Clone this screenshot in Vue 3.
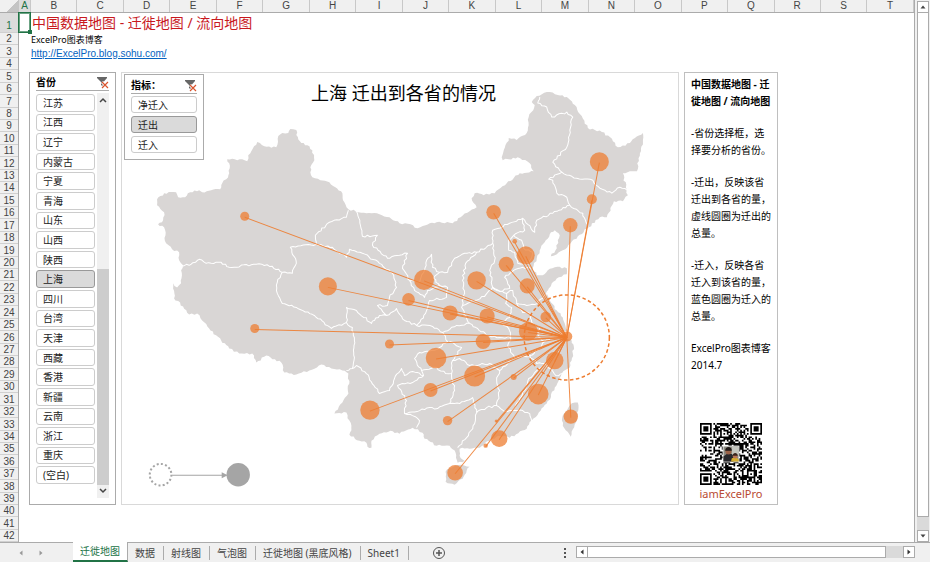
<template>
  <div class="workbook">
    <div class="upper">
      <div class="sheet">
        <div class="col-heads">
          <div class="corner"></div>
          <div class="col-head narrow selected">A</div>
          <div v-for="c in columns" :key="c" class="col-head">{{ c }}</div>
        </div>
        <div class="sheet-body">
          <div class="row-heads">
            <div v-for="n in 42" :key="n" class="row-head" :class="{ first: n === 1 }">{{ n }}</div>
          </div>
          <main class="cells">
            <div class="cursor"></div>
            <h1 class="title">中国数据地图 - 迁徙地图 / 流向地图</h1>
            <div class="author">ExcelPro图表博客</div>
            <a class="link" href="http://ExcelPro.blog.sohu.com/">http://ExcelPro.blog.sohu.com/</a>

            <div class="panels">
              <section class="slicer">
                <header class="slicer-head">
                  <span>省份</span>
                  <button class="clear" aria-label="清除筛选器">
                    <svg viewBox="0 0 12 12" width="12" height="12">
                      <path d="M0 0h10v1L6.500 5v5L4 8V5L0 1z" fill="#666" />
                      <path d="M5 5l6 6M11 5l-6 6" stroke="#fff" stroke-width="3" />
                      <path d="M5 5l6 6M11 5l-6 6" stroke="#d9532c" stroke-width="1.200" />
                    </svg>
                  </button>
                </header>
                <div class="slicer-body">
                  <div class="items">
                    <button
                      v-for="p in provinces"
                      :key="p"
                      class="item"
                      :class="{ active: p === province }"
                      @click="province = p"
                    >{{ p }}</button>
                  </div>
                  <div class="scroller">
                    <button class="scroller-btn" aria-label="向上">
                      <svg viewBox="0 0 12 12" width="12" height="12"><path d="M3 8l3-3 3 3" class="chevron" /></svg>
                    </button>
                    <div class="scroller-space"></div>
                    <div class="scroller-thumb"></div>
                    <button class="scroller-btn" aria-label="向下">
                      <svg viewBox="0 0 12 12" width="12" height="12"><path d="M3 4l3 3 3-3" class="chevron" /></svg>
                    </button>
                  </div>
                </div>
              </section>

              <section class="chart">
                <svg class="map" viewBox="123 73 555 430" role="img" aria-label="迁徙地图">
                  <text class="chart-title" x="404" y="100" text-anchor="middle">{{ province }} {{ metric }}到各省的情况</text>
                  <path v-for="(d, i) in landPaths" :key="'l' + i" :d="d" class="land" />
                  <path v-for="(d, i) in borderPaths" :key="'b' + i" :d="d" class="border" />
                  <circle v-for="(b, i) in bubbles" :key="'c' + i" :cx="b[0]" :cy="b[1]" :r="b[2]" class="bubble" />
                  <line v-for="(b, i) in bubbles" :key="'f' + i" :x1="b[0]" :y1="b[1] + 1" x2="567" y2="337" class="flow" />
                  <circle cx="567" cy="337" r="42.500" class="total" />
                  <circle cx="161.500" cy="474" r="10.800" class="legend-from" />
                  <path d="M173 474.500h51" stroke="#a5a5a5" stroke-width="1" />
                  <path d="M222.500 471.500l6 3-6 3z" fill="#a5a5a5" />
                  <circle cx="239" cy="474" r="11.700" fill="#a5a5a5" />
                </svg>
                <section class="slicer metric">
                  <header class="slicer-head">
                    <span>指标：</span>
                    <button class="clear" aria-label="清除筛选器">
                      <svg viewBox="0 0 12 12" width="12" height="12">
                        <path d="M0 0h10v1L6.500 5v5L4 8V5L0 1z" fill="#666" />
                        <path d="M5 5l6 6M11 5l-6 6" stroke="#fff" stroke-width="3" />
                        <path d="M5 5l6 6M11 5l-6 6" stroke="#d9532c" stroke-width="1.200" />
                      </svg>
                    </button>
                  </header>
                  <div class="metric-items">
                    <button
                      v-for="m in metrics"
                      :key="m"
                      class="item"
                      :class="{ active: m === metric }"
                      @click="metric = m"
                    >{{ m }}</button>
                  </div>
                </section>
              </section>

              <aside class="notes">
                <p class="strong">中国数据地图 - 迁<br />徙地图 / 流向地图</p>
                <p>-省份选择框，选<br />择要分析的省份。</p>
                <p>-迁出，反映该省<br />迁出到各省的量，<br />虚线圆圈为迁出的<br />总量。</p>
                <p>-迁入，反映各省<br />迁入到该省的量，<br />蓝色圆圈为迁入的<br />总量。</p>
                <p>ExcelPro图表博客<br />2014.7</p>
                <div class="qr">
                  <svg viewBox="0 0 37 37" width="62" height="62" role="img" aria-label="二维码">
                    <path :d="qrPath" fill="#000" />
                    <rect x="13.500" y="13.500" width="10" height="10" fill="#fff" />
                    <rect x="14" y="14" width="9" height="9" fill="#8b8a80" />
                    <rect x="19" y="14" width="4" height="5" fill="#c3c5be" />
                    <path d="M14 23v-3l2-1.500h3l1 1.500v3z" fill="#28282c" />
                    <circle cx="17" cy="17" r="1.800" fill="#9a6248" />
                    <path d="M15 16.500c0-3 4-3 4 0z" fill="#211a18" />
                    <path d="M18.500 23l.500-2 2-.500 2 1V23z" fill="#d6ae2f" />
                    <circle cx="21" cy="19.800" r="1.400" fill="#b97558" />
                    <path d="M19.500 19.500c0-2.200 3-2.200 3 0z" fill="#3a241d" />
                  </svg>
                  <div class="qr-name">iamExcelPro</div>
                </div>
              </aside>
            </div>
          </main>
        </div>
      </div>
      <div class="vscroll">
        <button class="bar-btn" aria-label="向上滚动">
          <svg viewBox="0 0 10 10" width="10" height="10"><path d="M2.500 6.500h5L5 3.500z" fill="#444" /></svg>
        </button>
        <div class="v-thumb"></div>
        <div class="v-rest"></div>
        <button class="bar-btn" aria-label="向下滚动">
          <svg viewBox="0 0 10 10" width="10" height="10"><path d="M2.500 3.500h5L5 6.500z" fill="#444" /></svg>
        </button>
      </div>
    </div>

    <footer class="tabbar">
      <div class="tab-nav">
        <button aria-label="上一个"><svg viewBox="0 0 8 8" width="8" height="8"><path d="M5.500 1.500v5L2.500 4z" fill="#999" /></svg></button>
        <button aria-label="下一个"><svg viewBox="0 0 8 8" width="8" height="8"><path d="M2.500 1.500v5l3-2.500z" fill="#999" /></svg></button>
      </div>
      <nav class="tabs">
        <button
          v-for="t in tabs"
          :key="t"
          class="tab"
          :class="{ current: t === tab }"
          @click="tab = t"
        >{{ t }}</button>
      </nav>
      <button class="add" aria-label="新工作表">
        <svg viewBox="0 0 14 14" width="14" height="14" fill="none" stroke="#555">
          <circle cx="7" cy="7" r="5.500" />
          <path d="M4 7h6M7 4v6" stroke-width="1.500" />
        </svg>
      </button>
      <div class="grip"><i></i><i></i><i></i></div>
      <div class="hscroll">
        <button class="bar-btn" aria-label="向左滚动">
          <svg viewBox="0 0 10 10" width="10" height="10"><path d="M6.500 2.500v5L3.500 5z" fill="#333" /></svg>
        </button>
        <div class="h-thumb"></div>
        <div class="h-rest"></div>
        <button class="bar-btn" aria-label="向右滚动">
          <svg viewBox="0 0 10 10" width="10" height="10"><path d="M3.500 2.500v5l3-2.500z" fill="#333" /></svg>
        </button>
      </div>
    </footer>
  </div>
</template>

<script setup>
import { ref } from "vue";

const columns = "BCDEFGHIJKLMNOPQRST".split("");

const provinces = [
  "江苏", "江西", "辽宁", "内蒙古", "宁夏", "青海", "山东", "山西", "陕西", "上海",
  "四川", "台湾", "天津", "西藏", "香港", "新疆", "云南", "浙江", "重庆", "(空白)",
];
const metrics = ["净迁入", "迁出", "迁入"];
const tabs = ["迁徙地图", "数据", "射线图", "气泡图", "迁徙地图 (黑底风格)", "Sheet1"];

const province = ref("上海");
const metric = ref("迁出");
const tab = ref("迁徙地图");

// "x,y x,y ..." outlines: mainland, Hainan, Taiwan
const land = [
  `158,199 165,193 177,192 179,197 186,197 191,192 200,190 203,192 212,190 221,189 223,183 227,179 230,173 230,163
  228,159 243,159 248,161 249,155 258,142 265,146 277,147 279,136 283,133 289,133 291,129 297,130 297,135 302,143
  308,145 313,150 315,160 311,167 311,172 313,177 321,180 330,182 336,187 343,193 345,202 349,209 367,213 380,214
  390,217 400,223 411,224 418,228 426,225 437,222 453,223 461,217 470,211 477,207 472,198 475,193 484,195 495,193
  507,183 520,173 534,171 530,163 518,157 509,159 503,160 502,157 509,138 517,140 527,133 529,117 535,105 532,102
  537,96 550,92 558,95 567,97 575,105 580,114 588,128 602,132 610,137 618,147 630,143 635,138 643,133 643,142
  640,153 637,171 623,173 626,187 628,195 623,201 614,201 607,217 600,217 589,227 578,236 563,250 555,255 551,256
  557,248 558,240 560,235 555,230 550,234 546,240 540,250 537,258 533,268 537,275 543,275 548,270 555,267 567,268
  567,274 559,277 552,283 549,288 547,293 550,300 557,310 563,317 565,323 568,330 559,333 572,340 574,346 573,353
  570,367 562,373 555,387 547,403 541,410 532,420 527,428 510,437 499,435 490,440 480,447 470,448 460,448 460,455
  465,460 458,462 456,452 450,445 437,445 425,438 423,432 413,427 400,433 391,430 380,433 372,440 372,447 368,446
  367,442 360,440 350,434 352,425 350,420 347,412 335,413 343,402 349,393 349,373 343,370 332,368 322,364 310,370
  297,374 285,372 282,362 267,355 257,362 253,353 240,353 230,348 222,340 210,328 203,320 198,313 190,314 184,306
  175,298 174,283 178,287 182,283 182,270 184,265 180,260 180,252 173,249 167,243 165,227 159,224 164,220 165,212 158,205`,
  "446,471 446,481 455,484 463,478 467,470 470,466 462,464 452,467",
  "575,402 578,402 577,417 571,436 563,425 563,415 570,405",
];

const borders = [
  `182,265 190,265 200,259 207,263 222,262 230,267 257,264 273,266 283,272 293,273 297,263 291,247 317,244
  316,235 330,222 347,217 349,210`,
  "283,272 278,282 278,293 283,303 297,307 315,315 332,328 347,322 353,327 355,340 355,357 353,368 347,370",
  `347,322 347,307 357,310 372,323 380,315 387,315 378,305 388,305 390,297 397,287 393,273 380,263 363,253
  350,249 347,257 333,247 317,244`,
  `357,211 361,225 363,236 378,235 373,245 388,258 400,255 408,253 403,268 410,280 420,282 425,270 427,260
  432,254 433,267 440,272 448,272 455,258 465,253 477,252 493,243 493,230 510,223 523,218 535,232 537,220
  553,213 570,205 567,197 557,193 553,180 549,179 562,172 553,162 567,147 570,130 573,117 567,112 552,117 547,107 538,103 540,97`,
  "562,172 577,178 593,180 600,188 605,190 612,193 620,187 627,190",
  "570,205 583,213 588,227",
  "410,280 415,290 425,297 428,290 440,285 434,278 440,272",
  "440,285 448,287 447,297 430,300 426,313 417,325",
  "477,252 466,263 463,280 465,293 462,307 467,318 470,323",
  "493,243 495,260 490,270 493,287 485,296 470,302 463,305",
  "493,287 500,291 510,288 505,277 514,270 523,267 531,268",
  "509,240 514,235 522,240 524,248 533,252 529,262 518,263 515,252 509,250 509,240",
  "523,218 525,230 514,235",
  "493,287 507,293 513,290 517,303 527,305 535,304 543,298 549,290",
  "507,293 506,303 512,307 510,317 500,322 509,328 511,337 500,337 487,335 478,328 470,323",
  "517,303 523,312 530,313 532,322 540,327 538,336 545,341 553,337 565,338",
  "387,315 397,308 405,320 417,325 433,326 443,332 457,325 470,323",
  "443,332 448,341 440,347 432,350 420,352 415,358 422,370 437,367 446,373 452,373 453,360 462,347 450,341",
  "353,368 357,365 367,373 380,393 390,390 395,378 402,368 405,375 413,371 424,375 422,370",
  "424,375 413,382 398,385 407,400 405,413 413,415 420,420 417,427",
  "405,413 420,410 430,407 438,408 450,403 455,390 452,373",
  "450,403 460,403 467,400 473,397 477,412 487,407 497,405 500,390 497,380 500,370 490,363 470,365 460,358 453,360",
  "477,412 475,423 467,437 458,447",
  "497,405 505,411 513,410 523,410 530,413 532,421",
  "513,410 520,398 525,390 529,378 535,372 545,363 556,375 563,373",
  "500,370 515,357 508,345 511,337",
  "515,357 530,355 538,350 545,341",
  "530,355 537,363 545,363",
];

// cx, cy, r
const bubbles = [
  [245.5, 216, 4.5], [255.5, 328, 4.5], [328.5, 286, 9], [494, 212, 7.3], [515, 241, 2.3],
  [526, 255, 9], [506.5, 264, 7.5], [527.5, 285.5, 7.5], [477, 280, 9.2], [424.5, 279.5, 10],
  [409, 299, 6.3], [450.5, 312.5, 7.5], [487.5, 315.5, 7.5], [528.5, 331, 9.3], [546, 316.5, 5.3],
  [567.5, 336, 5], [483.5, 341, 7.5], [390, 343.5, 4.5], [436.5, 357.5, 10.3], [555, 360, 8.7],
  [475, 375.5, 10.5], [514, 376.5, 3], [538.5, 393.5, 10.3], [431, 389.5, 7], [370.5, 409.5, 9.7],
  [448, 420, 4.7], [496.5, 420.5, 1.5], [499.5, 438, 8.3], [486, 445, 2.2], [455.5, 472, 7.8],
  [571, 416, 7.2], [599.5, 161.5, 9.5], [592, 199, 5], [570.5, 225, 7.2],
];

const noise = (x, y) => {
  const v = Math.sin(x * 12.9898 + y * 78.233) * 43758.5453;
  return v - Math.floor(v) - 0.5;
};

// breaks straight segments into short wobbly ones
const roughen = (text, closed) => {
  const pts = text.trim().split(/\s+/).map((p) => p.split(",").map(Number));
  if (closed) pts.push(pts[0]);
  const out = [pts[0]];
  for (let i = 1; i < pts.length; i++) {
    const [x0, y0] = pts[i - 1];
    const [x1, y1] = pts[i];
    const len = Math.hypot(x1 - x0, y1 - y0) || 1;
    const steps = Math.max(1, Math.round(len / 2.5));
    for (let s = 1; s <= steps; s++) {
      const t = s / steps;
      const off = s < steps ? noise(x0 + s, y1 - s) * 2 : 0;
      out.push([
        x0 + (x1 - x0) * t - ((y1 - y0) / len) * off,
        y0 + (y1 - y0) * t + ((x1 - x0) / len) * off,
      ]);
    }
  }
  return "M" + out.map((p) => p.map((n) => n.toFixed(1)).join(" ")).join("L") + (closed ? "Z" : "");
};

const landPaths = land.map((t) => roughen(t, true));
const borderPaths = borders.map((t) => roughen(t, false));

const ring = (x, y, cx, cy, size) => {
  const d = Math.max(Math.abs(x - cx), Math.abs(y - cy));
  if (d > size) return null;
  return size === 4 ? d === 3 || d <= 1 : d !== 1;
};

const isDark = (x, y) => {
  for (const [cx, cy, size] of [[3, 3, 4], [33, 3, 4], [3, 33, 4], [30, 30, 2]]) {
    const hit = ring(x, y, cx, cy, size);
    if (hit !== null) return hit;
  }
  if (x === 6 || y === 6) return (x + y) % 2 === 0;
  return noise(x + 3, y + 7) > -0.02;
};

let qrPath = "";
for (let y = 0; y < 37; y++) {
  for (let x = 0; x < 37; x++) {
    if (isDark(x, y)) qrPath += `M${x} ${y}h1v1h-1z`;
  }
}
</script>

<style>
body {
  margin: 0;
  background: #f0f0f0;
}
</style>

<style scoped>
* {
  box-sizing: border-box;
}

button {
  margin: 0;
  padding: 0;
  border: 0;
  background: none;
  font: inherit;
  color: inherit;
}

svg {
  display: block;
}

.workbook {
  display: flex;
  flex-direction: column;
  min-height: 100vh;
  background: #f0f0f0;
  font-family: "Noto Sans", "Noto Sans CJK SC", sans-serif;
  font-size: 10px;
  color: #222;
}

.upper {
  flex: 1;
  display: flex;
}

.sheet {
  flex: 1;
  display: flex;
  flex-direction: column;
  border-right: 1px solid #ababab;
}

/* headings */
.col-heads {
  display: flex;
  height: 13px;
  border-bottom: 1px solid #ababab;
  font-family: "Liberation Sans", Arial, sans-serif;
  line-height: 12px;
  text-align: center;
  color: #444;
}

.corner {
  width: 19px;
  background: linear-gradient(135deg, #f0f0f0 60%, #c4c4c4 60%);
}

.col-head {
  flex: 1;
  border-right: 1px solid #c8c8c8;
}

.col-head.narrow {
  flex: 0 0 12px;
}

.col-head.selected {
  background: #dcdcdc;
  color: #217346;
}

.sheet-body {
  flex: 1;
  display: flex;
  background: #fff;
}

.row-heads {
  width: 19px;
  display: flex;
  flex-direction: column;
  background: #f0f0f0;
  border-right: 1px solid #ababab;
  font-family: "Liberation Sans", Arial, sans-serif;
  color: #444;
}

.row-head {
  flex: 1;
  display: flex;
  align-items: flex-end;
  justify-content: center;
  border-bottom: 1px solid #d0d0d0;
  line-height: 10px;
}

.row-head.first {
  flex: 0 0 20px;
  padding-bottom: 1px;
  background: #dcdcdc;
  color: #217346;
}

.cells {
  position: relative;
  flex: 1;
  padding: 0 136px 0 10px;
}

.cursor {
  position: absolute;
  top: -1px;
  left: -1px;
  width: 13px;
  height: 21px;
  border: 1px solid #217346;
  outline: 1px solid #6ba283;
  outline-offset: -2px;
}

.cursor::after {
  content: "";
  position: absolute;
  right: -2px;
  bottom: -2px;
  width: 4px;
  height: 4px;
  background: #217346;
}

.title {
  margin: 0 0 0 3px;
  font-size: 14px;
  font-weight: 400;
  line-height: 19px;
  color: #c8191e;
}

.author {
  margin: 2px 0 0 2px;
  font-size: 9px;
  line-height: 12px;
  color: #000;
}

.link {
  display: block;
  width: max-content;
  margin: 2px 0 12px 2px;
  font-family: "Liberation Sans", Arial, sans-serif;
  line-height: 12px;
  color: #0563c1;
}

.panels {
  display: grid;
  grid-template-columns: 87px 1fr 94px;
  column-gap: 5px;
}

/* slicers */
.slicer {
  display: flex;
  flex-direction: column;
  padding: 2px 6px 6px;
  background: #fff;
  border: 1px solid #ababab;
}

.slicer-head {
  display: flex;
  justify-content: space-between;
  height: 16px;
  padding-top: 1px;
  border-bottom: 1px solid #ababab;
  font-weight: 700;
  line-height: 12px;
  color: #000;
}

.slicer-body {
  flex: 1;
  display: flex;
  justify-content: space-between;
  padding-top: 2px;
}

.items {
  width: 59px;
  display: flex;
  flex-direction: column;
  gap: 2px;
  padding: 1px 0 14px;
}

.item {
  flex: 1;
  padding: 0 6px;
  border: 1px solid #ccc;
  border-radius: 3px;
  background: #fff;
  line-height: 14px;
  text-align: left;
  color: #222;
}

.item.active {
  border-color: #999;
  background: #dadada;
}

.scroller {
  width: 12px;
  display: flex;
  flex-direction: column;
  background: #f0f0f0;
}

.scroller-btn {
  height: 13px;
}

.scroller-space {
  flex: 163;
}

.scroller-thumb {
  flex: 216;
  background: #cdcdcd;
}

.chevron {
  fill: none;
  stroke: #444;
  stroke-width: 1.5;
}

.metric {
  position: absolute;
  top: 1px;
  left: 2px;
  width: 80px;
  padding: 3px 6px 6px;
}

.metric-items {
  display: flex;
  flex-direction: column;
  gap: 3px;
  padding-top: 2px;
}

.metric-items .item {
  flex: 0 0 17px;
}

/* chart */
.chart {
  position: relative;
  border: 1px solid #d9d9d9;
}

.map {
  width: 100%;
}

.chart-title {
  font-size: 18px;
  fill: #000;
}

.land {
  fill: #d9d6d5;
}

.border {
  fill: none;
  stroke: #fff;
  stroke-width: 1;
  stroke-linejoin: round;
}

.bubble {
  fill: #ed7d31;
  fill-opacity: 0.75;
}

.flow {
  stroke: #ed7d31;
  stroke-width: 1;
  stroke-opacity: 0.9;
}

.total {
  fill: none;
  stroke: #ed7d31;
  stroke-width: 1.5;
  stroke-dasharray: 3.500 2.500;
}

.legend-from {
  fill: none;
  stroke: #a5a5a5;
  stroke-width: 2;
  stroke-dasharray: 2 2.240;
}

/* notes */
.notes {
  display: flex;
  flex-direction: column;
  padding: 3px 0 3px 6px;
  border: 1px solid #bfbfbf;
  line-height: 17px;
  white-space: nowrap;
  color: #000;
}

.notes p {
  margin: 0 0 15px;
}

.strong {
  font-weight: 700;
}

.qr {
  align-self: center;
  margin-top: auto;
  padding-right: 6px;
}

.qr-name {
  margin-top: 1px;
  font-size: 11px;
  line-height: 15px;
  text-align: center;
  color: #b84a32;
}

/* window scroll bars */
.vscroll {
  width: 12px;
  margin: 1px 1px 0 2px;
  display: flex;
  flex-direction: column;
}

.bar-btn {
  flex: 0 0 12px;
  display: flex;
  align-items: center;
  justify-content: center;
  background: #fff;
  border: 1px solid #ababab;
}

.v-thumb {
  flex: 1;
  background: #fff;
  border: 1px solid #ababab;
  border-top: 0;
}

.v-rest {
  flex: 0 0 13px;
  background: #dadada;
}

/* sheet tabs */
.tabbar {
  display: flex;
  height: 20px;
  padding-right: 15px;
  border-top: 1px solid #ababab;
  color: #444;
}

.tab-nav {
  flex: 0 0 73px;
  display: flex;
  align-items: center;
  gap: 12px;
  padding-left: 17px;
}

.tabs {
  display: flex;
  align-items: center;
}

.tab {
  height: 14px;
  padding: 0 8px 0 7px;
  border-right: 1px solid #ababab;
  line-height: 12px;
}

.tab.current {
  align-self: stretch;
  height: auto;
  padding: 0 7px;
  margin-top: -1px;
  background: #fff;
  border-bottom: 2px solid #217346;
  color: #217346;
}

.add {
  margin-left: 23px;
}

.grip {
  margin-left: auto;
  display: flex;
  flex-direction: column;
  justify-content: center;
  gap: 2px;
}

.grip i {
  width: 2px;
  height: 2px;
  background: #555;
}

.hscroll {
  flex: 0 0 37%;
  height: 12px;
  margin: 3px 0 0 10px;
  display: flex;
}

.h-thumb {
  flex: 1;
  background: #fff;
  border: 1px solid #ababab;
  border-left: 0;
}

.h-rest {
  flex: 0 0 17px;
  background: #dadada;
}
</style>
